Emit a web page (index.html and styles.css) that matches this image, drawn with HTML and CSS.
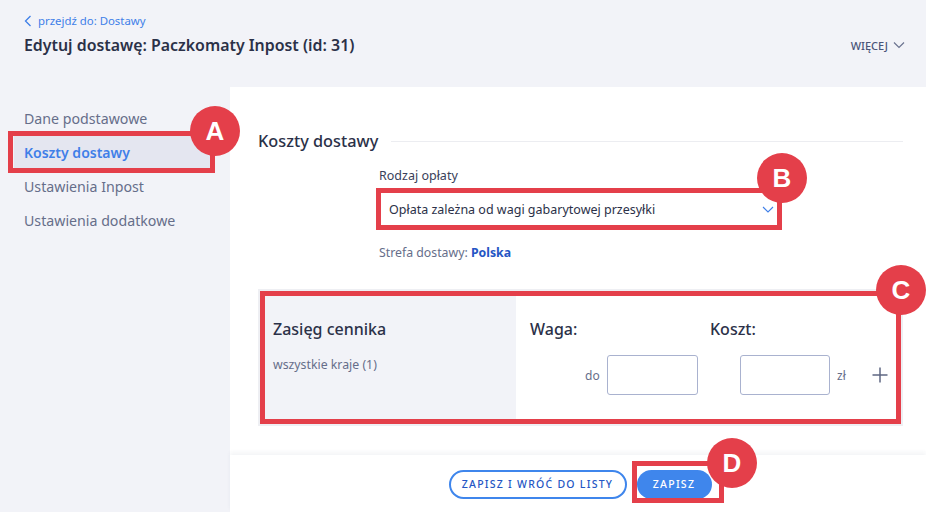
FILE: index.html
```html
<!DOCTYPE html>
<html>
<head>
    <title>Edytuj dostawę</title>
    <link rel="stylesheet" href="styles.css">
</head>
<body>
<div class="page-header">
    <div>
        <a class="back-link" href="#">
            <svg width="8" height="12" viewBox="0 0 8 12"><path d="M6.5 1 L1.5 6 L6.5 11" fill="none" stroke="#3f7fe8" stroke-width="1.3"/></svg>
            <span>przejdź do: Dostawy</span>
        </a>
        <h1 class="page-title">Edytuj dostawę: Paczkomaty Inpost (id: 31)</h1>
    </div>
    <div class="more">
        <span>WIĘCEJ</span>
        <svg width="12" height="8" viewBox="0 0 12 8"><path d="M1 1.5 L6 6.5 L11 1.5" fill="none" stroke="#6b7390" stroke-width="1.2"/></svg>
    </div>
</div>

<div class="content">
    <ul class="side-menu">
        <li>Dane podstawowe</li>
        <li class="active">Koszty dostawy</li>
        <li>Ustawienia Inpost</li>
        <li>Ustawienia dodatkowe</li>
    </ul>

    <div class="panel">
        <div class="panel-body">
            <div class="section-title">
                <span>Koszty dostawy</span>
                <div class="section-line"></div>
            </div>

            <div class="form-block">
                <div class="field-label">Rodzaj opłaty</div>
                <div class="select">
                    <span>Opłata zależna od wagi gabarytowej przesyłki</span>
                    <svg width="12" height="7" viewBox="0 0 12 7"><path d="M1 1 L6 6 L11 1" fill="none" stroke="#3f7fe8" stroke-width="1.1"/></svg>
                </div>
                <div class="zone">Strefa dostawy: <b>Polska</b></div>
            </div>

            <div class="price-table">
                <div class="price-left">
                    <div class="price-heading">Zasięg cennika</div>
                    <div class="price-sub">wszystkie kraje (1)</div>
                </div>
                <div class="price-right">
                    <div class="price-heads">
                        <div class="price-heading head-weight">Waga:</div>
                        <div class="price-heading">Koszt:</div>
                    </div>
                    <div class="price-inputs">
                        <span class="unit unit-do">do</span>
                        <div class="box box-weight"></div>
                        <div class="box box-cost"></div>
                        <span class="unit unit-zl">zł</span>
                        <svg class="plus" width="16" height="16" viewBox="0 0 16 16"><path d="M8 0.5 V15.5 M0.5 8 H15.5" fill="none" stroke="#5f6782" stroke-width="1.5"/></svg>
                    </div>
                </div>
            </div>
        </div>

        <div class="footer">
            <a class="button button-outline" href="#">ZAPISZ I WRÓĆ DO LISTY</a>
            <a class="button button-blue" href="#">ZAPISZ</a>
        </div>
    </div>
</div>

<!-- adnotacje na zrzucie -->
<div class="mark mark-a"></div>
<div class="mark mark-b"></div>
<div class="mark mark-c"></div>
<div class="mark mark-d"></div>
<div class="badge badge-a">A</div>
<div class="badge badge-b">B</div>
<div class="badge badge-c">C</div>
<div class="badge badge-d">D</div>
</body>
</html>
```

FILE: styles.css
```css
html, body {
    height: 512px;
    overflow: hidden;
}

body {
    margin: 0;
    position: relative;
    font-family: "Noto Sans", Arial, sans-serif;
    background-color: #F2F3F8;
    color: #2B3148;
}

.page-header {
    display: flex;
    justify-content: space-between;
    height: 87px;
    padding: 13px 21px 0 24px;
    box-sizing: border-box;
}

.back-link {
    display: flex;
    align-items: center;
    gap: 6px;
    font-size: 11.4px;
    line-height: 16px;
    color: #3F7FE8;
    text-decoration: none;
}

.page-title {
    margin: 6px 0 0;
    font-size: 15.9px;
    line-height: 20px;
    font-weight: 600;
}

.more {
    display: flex;
    align-items: center;
    gap: 5px;
    height: 16px;
    margin-top: 24px;
    font-size: 11px;
    font-weight: 500;
    color: #4A5578;
}

.content {
    display: flex;
    height: 425px;
}

.side-menu {
    list-style: none;
    flex: none;
    width: 196px;
    margin: 15px 20px 0 14px;
    padding: 0;
    font-size: 14.2px;
    color: #666E8A;
}

.side-menu li {
    height: 34px;
    line-height: 34px;
    padding-left: 10px;
}

.side-menu .active {
    font-weight: 600;
    font-size: 14px;
    color: #3F7FE8;
    background-color: #E4E6F0;
}

.panel {
    flex: 1;
    display: flex;
    flex-direction: column;
    background-color: #FFFFFF;
}

.panel-body {
    flex: 1;
    padding: 43px 23px 0 28px;
}

.section-title {
    display: flex;
    align-items: center;
    gap: 13px;
    font-size: 16.3px;
    font-weight: 500;
    line-height: 22px;
}

.section-line {
    flex: 1;
    height: 1px;
    background-color: #ECEDF1;
}

.form-block {
    margin: 15px 0 0 121px;
}

.field-label {
    font-size: 12.5px;
    line-height: 18px;
    color: #3A415A;
}

.select {
    display: flex;
    justify-content: space-between;
    align-items: center;
    width: 400px;
    height: 34px;
    margin-top: 7px;
    padding: 0 5px 0 10px;
    box-sizing: border-box;
    font-size: 12.5px;
    color: #2B3148;
}

.zone {
    margin-top: 18px;
    font-size: 12.3px;
    line-height: 18px;
    color: #666E8A;
}

.zone b {
    color: #2456C4;
}

.price-table {
    display: flex;
    height: 133px;
    margin-top: 27px;
    border: 2px solid #EEEFF3;
}

.price-left {
    width: 256px;
    padding: 27px 13px 0;
    box-sizing: border-box;
    background-color: #F2F3F8;
}

.price-heading {
    font-size: 16px;
    line-height: 22px;
    font-weight: 500;
}

.price-sub {
    margin-top: 16px;
    font-size: 12.3px;
    line-height: 18px;
    color: #666E8A;
}

.price-right {
    flex: 1;
    padding: 27px 0 0 14px;
}

.price-heads {
    display: flex;
}

.head-weight {
    width: 180px;
}

.price-inputs {
    display: flex;
    align-items: center;
    margin-top: 15px;
}

.unit {
    font-size: 12px;
    color: #666E8A;
}

.unit-do {
    margin-left: 55px;
    width: 22px;
}

.box {
    height: 40px;
    border: 1px solid #A9B2CF;
    border-radius: 3px;
    box-sizing: border-box;
}

.box-weight {
    width: 91px;
}

.box-cost {
    width: 90px;
    margin-left: 42px;
}

.unit-zl {
    margin-left: 7px;
}

.plus {
    margin-left: 26px;
}

.footer {
    display: flex;
    justify-content: center;
    gap: 10px;
    height: 57px;
    padding: 15px 0 0 4px;
    box-sizing: border-box;
    background-color: #FFFFFF;
    box-shadow: 0 -3px 4px rgba(40, 50, 90, 0.05);
}

.button {
    height: 29px;
    line-height: 29px;
    box-sizing: border-box;
    border-radius: 15px;
    font-size: 10.5px;
    font-weight: 500;
    letter-spacing: 1.25px;
    text-align: center;
    text-decoration: none;
}

.button-outline {
    width: 178px;
    line-height: 25px;
    border: 2px solid #3F86EC;
    color: #2456C4;
}

.button-blue {
    width: 75px;
    background-color: #3F86EC;
    color: #FFFFFF;
}

/* czerwone ramki i kółka */
.mark {
    position: absolute;
    box-sizing: border-box;
    border: 5px solid #E43F4A;
}

.mark-a { left: 8px; top: 131px; width: 207px; height: 42px; }
.mark-b { left: 376px; top: 188px; width: 406px; height: 42px; }
.mark-c { left: 260px; top: 291px; width: 641px; height: 133px; }
.mark-d { left: 632px; top: 461px; width: 92px; height: 42px; }

.badge {
    position: absolute;
    width: 50px;
    height: 50px;
    line-height: 50px;
    border-radius: 50%;
    background-color: #E43F4A;
    color: #FFFFFF;
    font-family: "Liberation Sans", Arial, sans-serif;
    font-size: 26px;
    font-weight: bold;
    text-align: center;
}

.badge-a { left: 190px; top: 106px; }
.badge-b { left: 757px; top: 153px; }
.badge-c { left: 876px; top: 265px; }
.badge-d { left: 707px; top: 438px; }
```
